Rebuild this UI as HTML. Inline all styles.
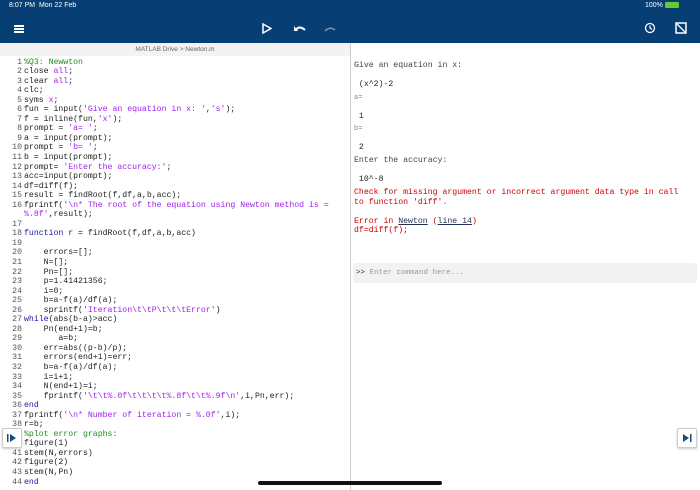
<!DOCTYPE html>
<html><head><meta charset="utf-8"><style>
*{margin:0;padding:0;box-sizing:border-box}
body{width:700px;height:490px;overflow:hidden;background:#fff;position:relative;font-family:"Liberation Sans",sans-serif}
.hdr{position:absolute;left:0;top:0;width:700px;height:43px;background:#073f74;color:#fff}
.crumb{position:absolute;left:0;top:43px;width:350px;height:13px;background:#f3f3f3;font-size:6.5px;color:#666;text-align:center;line-height:13px}
.div{position:absolute;left:350px;top:43px;width:1px;height:447px;background:#ccc}
.code{position:absolute;left:4px;top:57.5px;font-family:"Liberation Mono",monospace;font-size:8.2px;line-height:9.55px;color:#222;white-space:pre}
.n{color:#555;display:inline-block;width:18px;text-align:right;margin-right:2px}
.k{color:#1a1aa6}.s{color:#a020f0}.c{color:#228b22}
.out{position:absolute;left:354px;font-family:"Liberation Mono",monospace;font-size:8.2px;color:#444;white-space:pre}
.r{color:#c00}
.cmd{position:absolute;left:353px;top:263px;width:344px;height:20px;background:#f2f2f2;border-radius:3px;font-family:"Liberation Mono",monospace;font-size:7.5px;color:#999;line-height:20px;padding-left:3px}
.btn{position:absolute;width:20px;height:20px;background:#fff;border:1px solid #ccc;box-shadow:0 1px 2px rgba(0,0,0,.2);border-radius:2px}
</style></head><body>
<div class="hdr">
<div style="position:absolute;left:9px;top:2px;font-size:7px">8:07 PM&nbsp; Mon 22 Feb</div>
<div style="position:absolute;left:645px;top:2px;font-size:7px">100% <span style="display:inline-block;width:14px;height:6px;background:#6c3;border-radius:1px;vertical-align:middle"></span></div>
<div style="position:absolute;left:14px;top:25px;width:10px;height:1.5px;background:#fff;box-shadow:0 3px 0 #fff,0 6px 0 #fff"></div>
<svg style="position:absolute;left:262px;top:23px" width="10" height="11"><path d="M1 1 L9 5.5 L1 10 Z" fill="none" stroke="#fff" stroke-width="1.5"/></svg>
<svg style="position:absolute;left:293px;top:24px" width="13" height="8"><path d="M3 6 Q6 1 12 6" fill="none" stroke="#fff" stroke-width="2"/><path d="M1 2 L1 7 L5 7Z" fill="#fff"/></svg>
<svg style="position:absolute;left:324px;top:25px" width="13" height="7"><path d="M1 6 Q6 1 11 5" fill="none" stroke="#7a97b5" stroke-width="1.5"/></svg>
<svg style="position:absolute;left:644px;top:22px" width="12" height="12"><circle cx="6" cy="6" r="4.5" fill="none" stroke="#fff" stroke-width="1.3"/><path d="M6 3.5V6L8 7.5" fill="none" stroke="#fff" stroke-width="1.2"/></svg>
<svg style="position:absolute;left:675px;top:22px" width="12" height="12"><rect x="1" y="1" width="10" height="10" fill="none" stroke="#fff" stroke-width="1.5"/><path d="M2 2L10 10" stroke="#fff" stroke-width="1.3"/></svg>
</div>
<div class="crumb">MATLAB Drive &gt; Newton.m</div>
<div class="div"></div>
<div class="code"><span class="n">1</span><span class="c">%Q3: Newwton</span>
<span class="n">2</span>close <span class="s">all</span>;
<span class="n">3</span>clear <span class="s">all</span>;
<span class="n">4</span>clc;
<span class="n">5</span>syms <span class="s">x</span>;
<span class="n">6</span>fun = input(<span class="s">'Give an equation in x: '</span>,<span class="s">'s'</span>);
<span class="n">7</span>f = inline(fun,<span class="s">'x'</span>);
<span class="n">8</span>prompt = <span class="s">'a= '</span>;
<span class="n">9</span>a = input(prompt);
<span class="n">10</span>prompt = <span class="s">'b= '</span>;
<span class="n">11</span>b = input(prompt);
<span class="n">12</span>prompt= <span class="s">'Enter the accuracy:'</span>;
<span class="n">13</span>acc=input(prompt);
<span class="n">14</span>df=diff(f);
<span class="n">15</span>result = findRoot(f,df,a,b,acc);
<span class="n">16</span>fprintf(<span class="s">'\n* The root of the equation using Newton method is =</span>
<span class="n"></span><span class="s">%.8f'</span>,result);
<span class="n">17</span>
<span class="n">18</span><span class="k">function</span> r = findRoot(f,df,a,b,acc)
<span class="n">19</span>
<span class="n">20</span>    errors=[];
<span class="n">21</span>    N=[];
<span class="n">22</span>    Pn=[];
<span class="n">23</span>    p=1.41421356;
<span class="n">24</span>    i=0;
<span class="n">25</span>    b=a-f(a)/df(a);
<span class="n">26</span>    sprintf(<span class="s">'Iteration\t\tP\t\t\tError'</span>)
<span class="n">27</span><span class="k">while</span>(abs(b-a)&gt;acc)
<span class="n">28</span>    Pn(end+1)=b;
<span class="n">29</span>       a=b;
<span class="n">30</span>    err=abs((p-b)/p);
<span class="n">31</span>    errors(end+1)=err;
<span class="n">32</span>    b=a-f(a)/df(a);
<span class="n">33</span>    i=i+1;
<span class="n">34</span>    N(end+1)=i;
<span class="n">35</span>    fprintf(<span class="s">'\t\t%.0f\t\t\t\t%.8f\t\t%.9f\n'</span>,i,Pn,err);
<span class="n">36</span><span class="k">end</span>
<span class="n">37</span>fprintf(<span class="s">'\n* Number of iteration = %.0f'</span>,i);
<span class="n">38</span>r=b;
<span class="n">39</span><span class="c">%plot error graphs:</span>
<span class="n">40</span>figure(1)
<span class="n">41</span>stem(N,errors)
<span class="n">42</span>figure(2)
<span class="n">43</span>stem(N,Pn)
<span class="n">44</span><span class="k">end</span></div>
<div class="out" style="top:61px">Give an equation in x:</div>
<div class="out" style="top:80px;color:#222"> (x^2)-2</div>
<div class="out" style="top:94px;font-size:7px;color:#888">a=</div>
<div class="out" style="top:112px;color:#222"> 1</div>
<div class="out" style="top:125px;font-size:7px;color:#888">b=</div>
<div class="out" style="top:143px;color:#222"> 2</div>
<div class="out" style="top:156px">Enter the accuracy:</div>
<div class="out" style="top:175px;color:#222"> 10^-8</div>
<div class="out r" style="top:188px;line-height:9.6px">Check for missing argument or incorrect argument data type in call
to function 'diff'.

Error in <span style="color:#235;text-decoration:underline">Newton</span> (<span style="color:#235;text-decoration:underline">line 14</span>)
df=diff(f);</div>
<div class="cmd"><span style="color:#333">&gt;&gt;</span> Enter command here...</div>
<div class="btn" style="left:2px;top:428px"><svg width="18" height="18"><rect x="4" y="5" width="1.5" height="8" fill="#1a4b7a"/><path d="M7 5L13 9L7 13Z" fill="#1a4b7a"/></svg></div>
<div class="btn" style="left:677px;top:428px"><svg width="18" height="18"><path d="M5 5L11 9L5 13Z" fill="#1a4b7a"/><rect x="12" y="5" width="1.5" height="8" fill="#1a4b7a"/></svg></div>
<div style="position:absolute;left:258px;top:481px;width:184px;height:4px;background:#111;border-radius:2px"></div>
</body></html>
